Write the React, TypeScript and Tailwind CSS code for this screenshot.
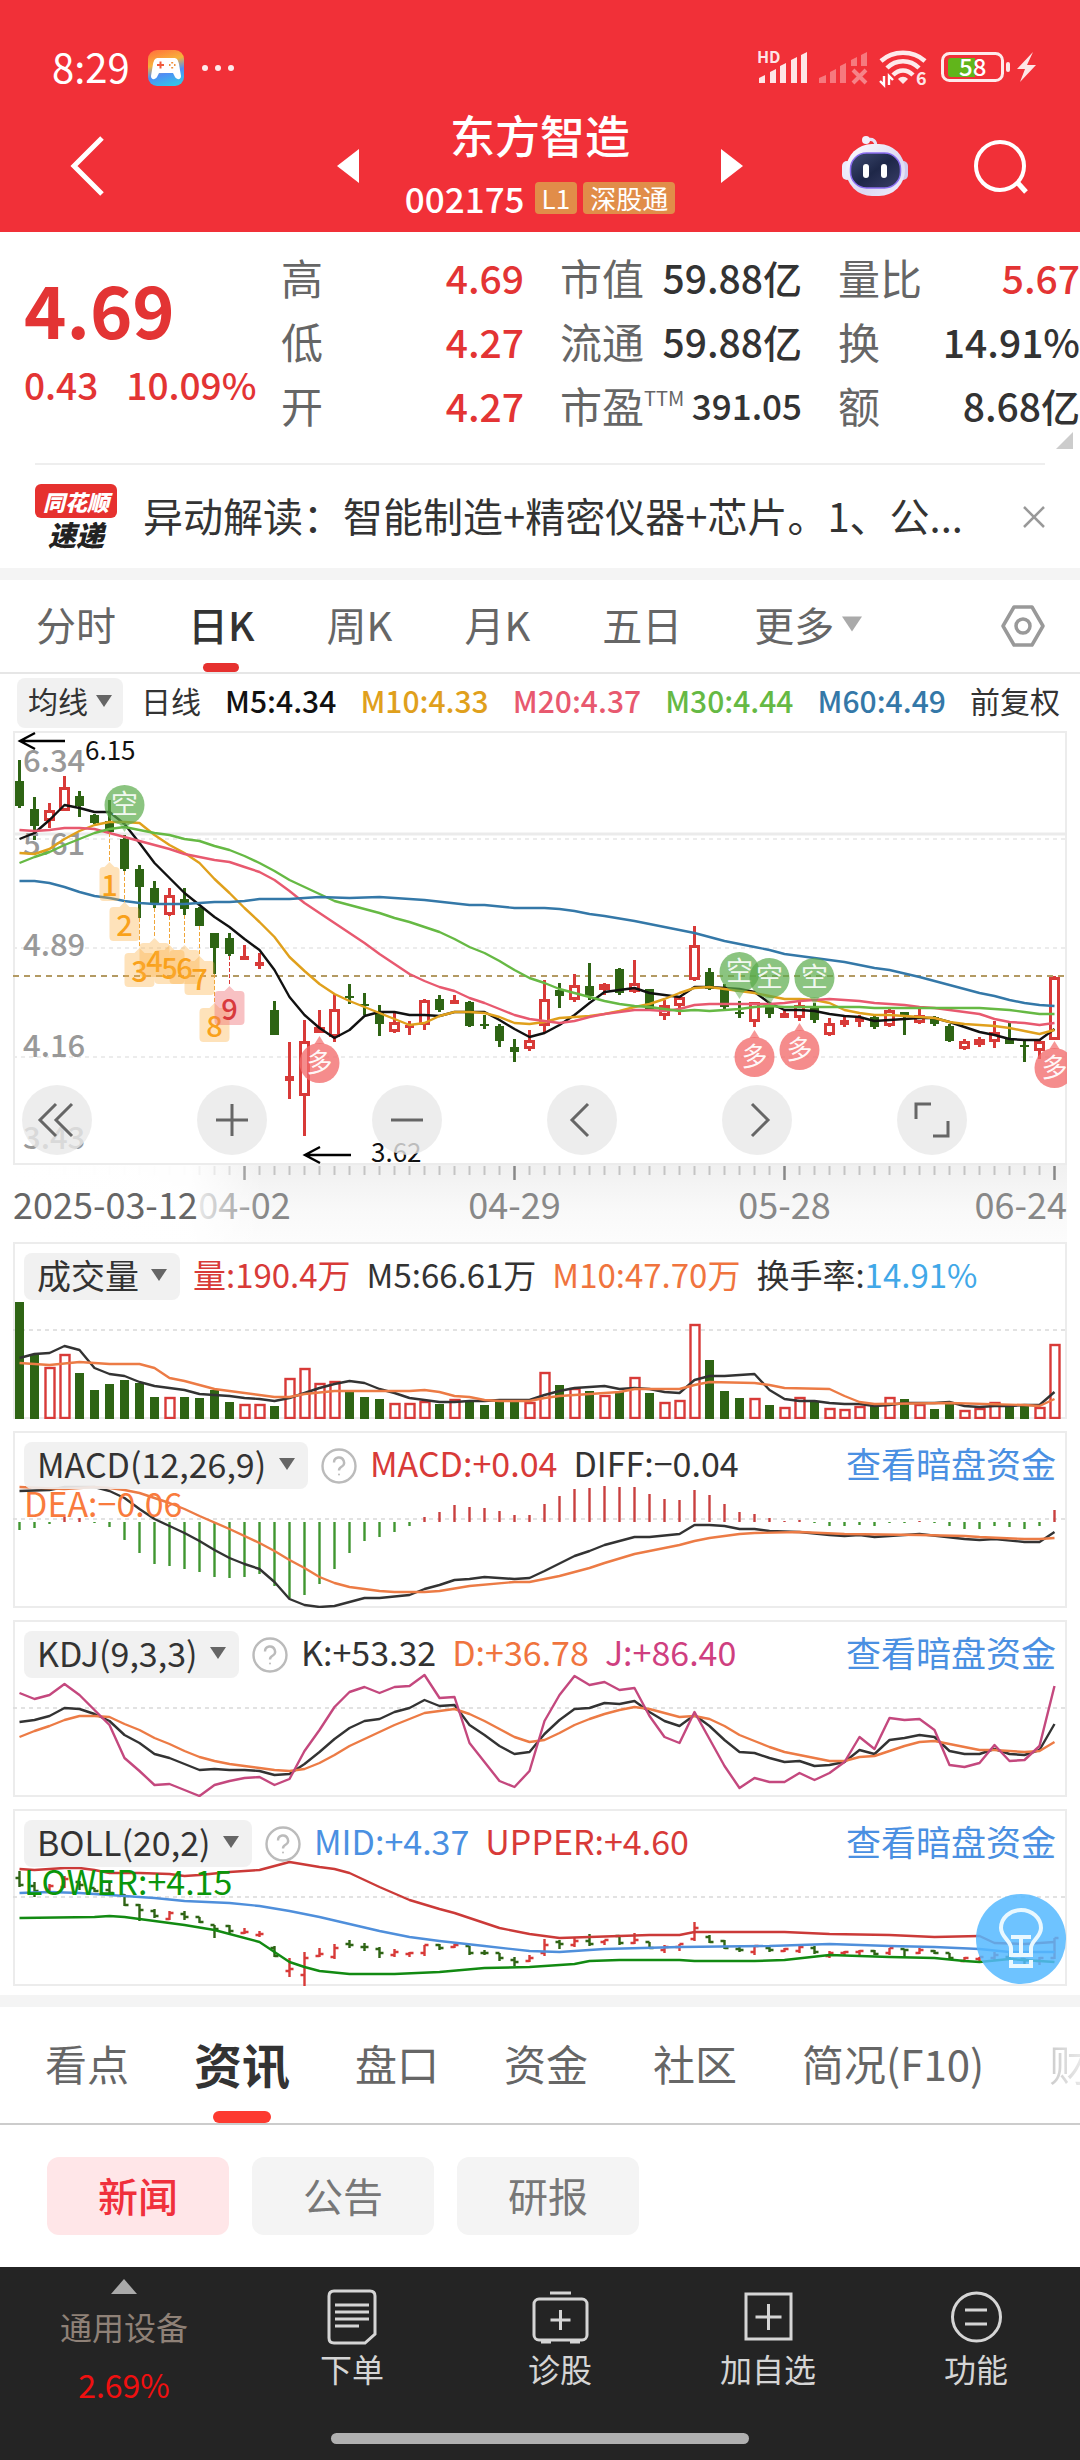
import { useState } from 'react'
import type { ReactNode } from 'react'
import clsx from 'clsx'

type Candle = [number, number, number, number, 0 | 1]
type Point = [number, number]

const STEP = 15
const px = (i: number) => 6.5 + i * STEP

// high, body top, body bottom, low, rising
const candles: Candle[] = [
  [29, 50, 75, 77, 0], [66, 78, 95, 109, 0], [72, 79, 90, 97, 1], [45, 56, 80, 80, 1], [60, 65, 75, 86, 0],
  [83, 84, 92, 93, 0], [69, 90, 101, 102, 0], [104, 108, 138, 140, 0], [134, 138, 156, 187, 0], [150, 157, 174, 177, 0],
  [157, 164, 184, 185, 1], [157, 168, 178, 184, 0], [176, 177, 195, 195, 0], [202, 202, 217, 243, 0], [202, 207, 223, 225, 0],
  [214, 225, 229, 229, 1], [222, 231, 235, 238, 1], [270, 279, 304, 304, 0], [311, 345, 350, 368, 1], [289, 310, 365, 405, 1],
  [279, 296, 302, 302, 1], [263, 278, 306, 311, 1], [253, 265, 267, 273, 0], [262, 273, 275, 284, 0], [274, 282, 293, 305, 0],
  [282, 291, 301, 302, 1], [290, 294, 297, 304, 1], [268, 269, 294, 299, 1], [264, 268, 279, 281, 0], [264, 269, 273, 273, 1],
  [270, 271, 295, 296, 0], [284, 293, 295, 298, 0], [293, 295, 310, 316, 0], [308, 316, 321, 331, 0], [299, 309, 318, 320, 1],
  [249, 268, 295, 301, 1], [252, 259, 265, 277, 0], [243, 254, 269, 271, 1], [232, 255, 265, 269, 0], [252, 253, 259, 264, 1],
  [237, 238, 262, 264, 0], [229, 252, 261, 262, 1], [258, 258, 278, 279, 0], [269, 274, 285, 289, 1], [265, 266, 275, 284, 1],
  [195, 214, 249, 250, 1], [237, 241, 258, 259, 0], [253, 256, 276, 278, 0], [270, 281, 283, 287, 0], [271, 271, 291, 296, 1],
  [272, 276, 283, 287, 0], [278, 282, 287, 287, 1], [271, 274, 287, 290, 1], [272, 276, 289, 292, 0], [287, 292, 304, 305, 1],
  [286, 289, 294, 296, 1], [284, 287, 291, 296, 1], [284, 286, 296, 298, 0], [278, 279, 295, 296, 1], [281, 281, 285, 304, 0],
  [278, 284, 292, 293, 1], [285, 286, 293, 295, 0], [293, 295, 310, 311, 0], [308, 310, 318, 319, 1], [306, 308, 314, 316, 1],
  [290, 301, 311, 317, 1], [291, 308, 313, 313, 0], [309, 314, 316, 331, 0], [308, 310, 320, 328, 1], [245, 246, 309, 309, 1],
]

const ma5 = [108, 102, 89, 74, 77, 81, 81, 93, 112, 132, 147, 162, 174, 186, 196, 208, 219, 239, 266, 284, 297, 307, 299, 285, 281, 281, 284, 284, 285, 281, 281, 281, 289, 298, 306, 302, 294, 284, 272, 261, 259, 257, 262, 264, 266, 256, 256, 257, 258, 261, 272, 279, 279, 280, 283, 285, 286, 290, 289, 288, 287, 287, 291, 296, 301, 304, 308, 309, 309, 298]
const ma10 = [122, 123, 118, 108, 100, 94, 91, 91, 92, 104, 114, 122, 132, 148, 162, 177, 191, 206, 226, 240, 253, 263, 270, 276, 282, 288, 294, 292, 285, 281, 281, 282, 286, 292, 293, 291, 287, 286, 285, 283, 280, 276, 273, 268, 262, 257, 256, 258, 260, 262, 265, 268, 268, 269, 272, 279, 282, 284, 284, 285, 286, 287, 291, 293, 294, 295, 297, 300, 303, 299]
const ma20 = [99, 100, 99, 97, 97, 98, 102, 106, 110, 114, 118, 123, 126, 129, 131, 136, 141, 149, 160, 172, 182, 192, 202, 212, 223, 233, 243, 250, 256, 260, 267, 272, 278, 284, 288, 290, 292, 290, 286, 283, 281, 279, 279, 280, 278, 274, 273, 273, 273, 273, 273, 272, 270, 269, 268, 269, 270, 272, 273, 274, 276, 277, 279, 281, 283, 288, 291, 292, 294, 292]
const ma30 = [132, 126, 121, 114, 108, 102, 98, 96, 99, 102, 104, 108, 110, 115, 119, 125, 132, 140, 149, 156, 163, 170, 174, 178, 182, 187, 191, 196, 201, 208, 216, 222, 230, 239, 247, 252, 258, 262, 266, 270, 273, 275, 276, 278, 280, 279, 280, 279, 278, 276, 275, 276, 276, 276, 276, 276, 276, 277, 277, 277, 277, 277, 277, 277, 277, 278, 279, 281, 283, 283]
const ma60: Point[] = [[0, 150], [1, 150], [2, 152], [3, 156], [4, 161], [5, 165], [6, 167], [7, 170], [8, 172], [9, 173], [11, 173], [13, 171], [14, 171], [15, 170], [16, 168], [18, 168], [20, 166], [22, 167], [24, 166], [26, 168], [27, 169], [30, 174], [31, 174], [33, 177], [35, 177], [36, 178], [37, 180], [38, 183], [39, 185], [41, 190], [42, 193], [43, 196], [45, 202], [47, 210], [49, 216], [50, 219], [51, 223], [53, 227], [55, 231], [57, 237], [58, 239], [60, 246], [62, 254], [64, 262], [65, 265], [66, 269], [67, 272], [68, 274], [69, 275]]

const volumes = [117, 65, 52, 65, 46, 29, 35, 39, 36, 22, 22, 22, 21, 29, 17, 15, 15, 13, 41, 51, 36, 38, 27, 22, 20, 16, 16, 18, 15, 20, 17, 14, 17, 19, 17, 47, 34, 31, 28, 24, 28, 42, 26, 17, 19, 95, 59, 28, 21, 21, 14, 12, 22, 18, 11, 10, 13, 14, 22, 20, 15, 10, 15, 9, 11, 17, 14, 14, 12, 75]
const vol5 = [61, 65, 66, 73, 69, 51, 45, 43, 37, 33, 31, 29, 25, 24, 23, 21, 20, 18, 21, 26, 31, 35, 38, 36, 30, 26, 21, 19, 17, 17, 18, 18, 19, 19, 19, 24, 28, 31, 32, 33, 30, 31, 30, 27, 26, 39, 43, 43, 44, 45, 29, 20, 18, 18, 16, 15, 15, 13, 14, 16, 16, 16, 17, 13, 12, 13, 13, 14, 14, 27]
const vol10: Point[] = [[0, 56], [2, 54], [4, 57], [6, 55], [8, 55], [9, 51], [10, 41], [11, 38], [12, 34], [13, 30], [14, 28], [16, 24], [17, 22], [18, 22], [19, 25], [21, 28], [26, 28], [27, 29], [28, 27], [29, 23], [30, 22], [31, 19], [32, 18], [34, 18], [35, 21], [36, 23], [39, 26], [40, 27], [41, 30], [44, 30], [45, 34], [46, 37], [49, 36], [50, 34], [51, 31], [54, 30], [55, 23], [56, 17], [57, 15], [62, 16], [67, 14], [68, 13], [69, 20]]

const macd = [-8, -6, -2, 5, 4, -1, -5, -18, -31, -42, -44, -47, -50, -55, -56, -55, -52, -64, -76, -73, -62, -47, -31, -19, -15, -10, -4, 5, 10, 17, 15, 14, 11, 7, 7, 18, 26, 33, 34, 36, 35, 35, 28, 23, 22, 32, 27, 18, 10, 8, 4, 1, 2, -1, -4, -4, -3, -4, -1, -1, 1, -1, -4, -7, -7, -4, -5, -7, -4, 12]
const diff: Point[] = [[0, 60], [2, 59], [3, 56], [5, 56], [6, 60], [7, 67], [8, 78], [9, 88], [10, 95], [11, 102], [12, 110], [13, 119], [14, 127], [15, 133], [16, 138], [17, 151], [18, 168], [19, 174], [20, 176], [21, 175], [23, 167], [24, 167], [26, 164], [27, 158], [28, 154], [29, 149], [30, 148], [31, 146], [33, 148], [34, 147], [35, 140], [37, 125], [38, 120], [39, 114], [40, 110], [41, 106], [42, 106], [44, 103], [45, 94], [46, 94], [47, 95], [48, 98], [49, 98], [50, 100], [52, 101], [54, 104], [55, 105], [56, 104], [57, 106], [60, 103], [63, 108], [64, 109], [65, 108], [67, 111], [68, 111], [69, 101]]
const dea: Point[] = [[0, 56], [3, 58], [5, 56], [6, 57], [7, 59], [8, 62], [9, 67], [10, 72], [11, 78], [12, 85], [14, 98], [16, 112], [17, 120], [18, 129], [19, 137], [20, 146], [21, 152], [22, 156], [24, 160], [25, 161], [27, 161], [28, 160], [30, 155], [33, 151], [34, 151], [36, 145], [38, 137], [39, 132], [41, 123], [44, 114], [45, 110], [46, 107], [48, 103], [49, 102], [52, 101], [55, 103], [60, 104], [63, 105], [64, 106], [67, 108], [68, 108], [69, 107]]

const kLine = [102, 100, 96, 88, 89, 94, 101, 115, 123, 134, 138, 144, 150, 149, 150, 150, 151, 155, 154, 144, 132, 119, 108, 101, 99, 92, 88, 80, 86, 85, 105, 115, 126, 134, 132, 114, 100, 89, 88, 83, 84, 81, 92, 101, 106, 95, 106, 120, 132, 133, 138, 142, 141, 146, 145, 142, 130, 134, 120, 118, 115, 117, 131, 134, 134, 129, 134, 135, 130, 104]
const dLine = [117, 111, 106, 100, 96, 96, 97, 104, 110, 118, 124, 131, 137, 141, 144, 146, 148, 150, 151, 149, 143, 135, 126, 119, 112, 105, 99, 93, 91, 89, 94, 101, 109, 117, 122, 120, 113, 105, 99, 94, 90, 87, 89, 93, 97, 96, 99, 106, 115, 121, 127, 132, 135, 138, 141, 141, 137, 136, 131, 126, 122, 121, 124, 127, 130, 130, 131, 132, 131, 122]
const jLine = [73, 79, 75, 64, 75, 90, 105, 138, 151, 165, 164, 170, 176, 165, 161, 158, 157, 165, 159, 131, 110, 87, 72, 67, 73, 67, 66, 55, 78, 77, 123, 142, 161, 167, 151, 101, 75, 56, 65, 62, 70, 68, 96, 117, 123, 92, 119, 146, 168, 158, 162, 162, 153, 160, 153, 142, 117, 129, 98, 100, 99, 110, 145, 147, 143, 125, 141, 140, 126, 66]

const upper: Point[] = [[0, 60], [1, 61], [3, 59], [4, 59], [5, 61], [6, 64], [8, 64], [10, 65], [11, 67], [12, 66], [14, 63], [16, 61], [18, 53], [20, 58], [21, 60], [22, 64], [24, 78], [26, 91], [28, 100], [29, 104], [32, 119], [34, 125], [36, 129], [38, 128], [42, 126], [44, 126], [45, 123], [51, 123], [54, 125], [58, 126], [61, 128], [64, 127], [65, 134], [67, 135], [69, 133]]
const mid: Point[] = [[0, 84], [2, 83], [4, 84], [6, 86], [9, 89], [11, 92], [14, 94], [16, 97], [18, 102], [20, 108], [22, 115], [24, 122], [26, 128], [28, 132], [31, 137], [34, 142], [36, 143], [39, 140], [44, 138], [50, 137], [54, 135], [58, 137], [61, 138], [64, 140], [66, 143], [69, 143]]
const lower: Point[] = [[0, 109], [5, 108], [6, 107], [7, 108], [8, 110], [11, 116], [13, 121], [16, 133], [18, 153], [19, 158], [20, 162], [22, 165], [25, 165], [28, 163], [31, 159], [34, 158], [36, 156], [37, 155], [38, 152], [40, 151], [44, 151], [45, 152], [49, 152], [51, 151], [54, 146], [58, 148], [61, 149], [63, 152], [64, 153], [66, 150], [69, 153]]

// candle index, tip y
const counts: Point[] = [[6, 131], [7, 171], [8, 217], [9, 207], [10, 214], [11, 214], [12, 225], [13, 272], [14, 255]]
const shorts: Point[] = [[7, 74], [48, 241], [50, 247], [53, 247]]
const longs: Point[] = [[20, 332], [49, 326], [52, 319], [69, 337]]

const RED = '#d83a38'
const GREEN = '#2e6414'

function Line({ data, color, width = 2.4 }: { data: number[] | Point[]; color: string; width?: number }) {
  const points = data
    .map((d, i) => (Array.isArray(d) ? `${px(d[0])},${d[1]}` : `${px(i)},${d}`))
    .join(' ')
  return <polyline points={points} fill="none" stroke={color} strokeWidth={width} strokeLinejoin="round" />
}

function Caret({ className }: { className?: string }) {
  return (
    <svg viewBox="0 0 16 12" className={className} aria-hidden="true">
      <path d="M0 0h16L8 12z" fill="currentColor" />
    </svg>
  )
}

function Picker({ label, name, small }: { label: string; name: string; small?: boolean }) {
  return (
    <label
      className={clsx(
        'flex shrink-0 items-center rounded-lg bg-[#f0f0f0]/90 pb-1 text-[#333]',
        small ? 'h-[50px] gap-2 px-[11px] text-[30px]' : 'h-[47px] gap-3 px-[13px] text-[34px]'
      )}
    >
      <select aria-label={name} className="shrink-0 appearance-none bg-transparent outline-none">
        <option>{label}</option>
      </select>
      <Caret className="h-3 w-4 text-[#666]" />
    </label>
  )
}

function Help() {
  return (
    <button aria-label="说明" className="size-9 shrink-0 text-[#bbb]">
      <svg viewBox="0 0 36 36" fill="none" stroke="currentColor" strokeWidth="2.4">
        <circle cx="18" cy="18" r="16.5" />
        <path d="M13 14.5a5 5 0 1 1 7.5 4.3c-1.8 1-2.5 1.8-2.5 3.7" />
        <circle cx="18" cy="26.5" r="1" fill="currentColor" stroke="none" />
      </svg>
    </button>
  )
}

function StatusIcons() {
  return (
    <svg viewBox="0 0 280 38" className="h-[38px] w-[280px] overflow-visible" fill="#fff" fillOpacity="0.88">
      <text x="0" y="14" fontSize="16" fontWeight="700">HD</text>
      <path d="M2 34v-5l6-3v8zM13 34V23l6-3v14zM23 34V17l6-3v20zM34 34V11l6-3v26zM44 34V6l6-3v31z" />
      <g opacity="0.4">
        <path d="M62 34v-5l7-3v8zM73 34V23l6-3v14zM83 34V17l6-3v20zM94 17v-6l6-3v9zM104 17V6l6-3v14z" />
        <path d="M96 21l13 13M109 21L96 34" stroke="#fff" strokeWidth="4" />
      </g>
      <g fill="none" stroke="#fff" strokeOpacity="0.9" strokeWidth="4.5">
        <path d="M124 12c12-11 32-11 44 0" />
        <path d="M130 19c9-9 23-9 32 0" />
        <path d="M136 26c6-6 14-6 20 0" />
      </g>
      <path d="M146 35l-5-5c3-3 7-3 10 0z" />
      <path d="M127 27v9l-4-4M132 36v-9l4 4" fill="none" stroke="#fff" strokeWidth="2.4" />
      <text x="159" y="36" fontSize="18" fontWeight="700">6</text>
      <rect x="185.500" y="4.500" width="60" height="27" rx="7" fill="none" stroke="#fff" strokeOpacity="0.9" strokeWidth="3" />
      <path d="M191 12q0-3 3-3h24v19h-24q-3 0-3-3z" fill="#61b51b" fillOpacity="1" />
      <text x="202" y="27" fontSize="24" fontWeight="500" fillOpacity="1">58</text>
      <rect x="249" y="13" width="4" height="10" rx="2" />
      <path d="M276 3l-16 17h8l-5 13 16-17h-9z" />
    </svg>
  )
}

function Robot() {
  return (
    <svg viewBox="0 0 66 62" className="h-[62px] w-[66px]">
      <defs>
        <linearGradient id="shell" x1="0" y1="0" x2="1" y2="1">
          <stop offset="0" stopColor="#fff" />
          <stop offset="0.6" stopColor="#dcd9f2" />
          <stop offset="1" stopColor="#f1effc" />
        </linearGradient>
        <linearGradient id="visor" x1="0" y1="0" x2="1" y2="1">
          <stop offset="0" stopColor="#3f4c72" />
          <stop offset="0.5" stopColor="#1e2748" />
          <stop offset="1" stopColor="#3a3f68" />
        </linearGradient>
      </defs>
      <path d="M25 5c6-2 9 1 9 7" fill="none" stroke="#e6e2f6" strokeWidth="3" />
      <circle cx="24" cy="5" r="4" fill="#f3f0fc" />
      <rect x="0" y="26" width="10" height="19" rx="5" fill="#eceafb" />
      <rect x="56" y="26" width="10" height="19" rx="5" fill="#cfcbee" />
      <rect x="4" y="9" width="59" height="52" rx="26" fill="url(#shell)" />
      <rect x="8.500" y="18" width="50" height="35" rx="16" fill="url(#visor)" stroke="#8a6df0" strokeWidth="1.500" />
      <rect x="21" y="29" width="6" height="14" rx="3" fill="#fff" />
      <rect x="39" y="29" width="6" height="14" rx="3" fill="#fff" />
    </svg>
  )
}

function Header() {
  return (
    <header className="bg-[#f13038] text-white">
      <div className="flex items-center justify-between pt-[34px] pr-[43px] pl-[52px]">
        <div className="flex h-[68px] items-center gap-[18px]">
          <span className="pb-1 text-[40px] leading-none">8:29</span>
          <svg viewBox="0 0 36 36" className="size-9">
            <defs>
              <linearGradient id="pad" x1="0.300" y1="0" x2="0.600" y2="1">
                <stop offset="0" stopColor="#ff7a3c" />
                <stop offset="0.350" stopColor="#f7b23b" />
                <stop offset="0.650" stopColor="#4f8df5" />
                <stop offset="1" stopColor="#35c2e8" />
              </linearGradient>
            </defs>
            <rect width="36" height="36" rx="9" fill="url(#pad)" />
            <path d="M10 8h16c3 0 4 2 5 6l2 12c0 4-4 4-6 1l-2-4H11l-2 4c-2 3-6 3-6-1l2-12c1-4 2-6 5-6z" fill="#fff" />
            <path d="M9 15h7M12.500 11.500v7" stroke="#f05a3c" strokeWidth="2" />
            <path d="M21 15h1.500M26 15h1.500M24.200 12v1.500M24.200 17v1.500" stroke="#f0903c" strokeWidth="2" />
          </svg>
          <svg viewBox="0 0 32 6" className="h-1.5 w-8" fill="#fff" fillOpacity="0.9">
            <circle cx="3" cy="3" r="3" />
            <circle cx="16" cy="3" r="3" />
            <circle cx="29" cy="3" r="3" />
          </svg>
        </div>
        <StatusIcons />
      </div>
      <div className="grid h-[130px] grid-cols-[1fr_406px_1fr] items-center pb-[3px]">
        <button aria-label="返回" className="ml-[70px] w-9 justify-self-start">
          <svg viewBox="0 0 36 60" className="h-[60px] w-9" fill="none" stroke="#fff" strokeWidth="5">
            <path d="M32 2L4 30l28 28" />
          </svg>
        </button>
        <div className="flex items-center justify-between">
          <button aria-label="上一只">
            <svg viewBox="0 0 22 34" className="h-[34px] w-[22px]"><path d="M22 0v34L0 17z" fill="#fff" /></svg>
          </button>
          <div className="flex flex-col items-center gap-2 pb-1">
            <h1 className="text-[45px] leading-[60px] font-medium">东方智造</h1>
            <div className="flex items-center gap-[6px]">
              <span className="mr-1 text-[35px] leading-[50px] font-medium">002175</span>
              <span className="rounded-sm bg-[#e18d49] px-[7px] text-[26px] leading-8">L1</span>
              <span className="rounded-sm bg-[#e18d49] px-[7px] text-[26px] leading-8">深股通</span>
            </div>
          </div>
          <button aria-label="下一只">
            <svg viewBox="0 0 22 34" className="h-[34px] w-[22px]"><path d="M0 0v34l22-17z" fill="#fff" /></svg>
          </button>
        </div>
        <div className="flex items-center justify-end gap-[66px] pr-[52px]">
          <button aria-label="智能助手"><Robot /></button>
          <button aria-label="搜索">
            <svg viewBox="0 0 54 56" className="h-14 w-[54px]" fill="none" stroke="#fff" strokeWidth="4">
              <circle cx="26" cy="28" r="24" />
              <path d="M43 44l9 10" strokeWidth="5" />
            </svg>
          </button>
        </div>
      </div>
    </header>
  )
}

function Stats({ rows, className }: { rows: { name: ReactNode; value: string; up?: boolean; small?: boolean }[]; className: string }) {
  return (
    <dl className={clsx('h-[192px] whitespace-nowrap', className)}>
      {rows.map((row, i) => (
        <div key={i} className="flex justify-between">
          <dt className="flex text-[42px] font-normal text-[#666]">{row.name}</dt>
          <dd className={clsx(row.up && 'text-[#e33434]', row.small && 'text-[35px]')}>{row.value}</dd>
        </div>
      ))}
    </dl>
  )
}

function Quote() {
  return (
    <section className="relative flex h-[231px] pt-[13px] text-[39px] leading-[64px] font-medium text-[#333]">
      <div className="w-[281px] shrink-0 pl-6 text-[#e33434]">
        <div className="mt-[19px] text-[72px] leading-[88px] font-bold">4.69</div>
        <div className="mt-1 flex gap-7 text-[37px] leading-[56px]">
          <span>0.43</span>
          <span>10.09%</span>
        </div>
      </div>
      <Stats
        className="w-[243px] shrink-0"
        rows={[
          { name: '高', value: '4.69', up: true },
          { name: '低', value: '4.27', up: true },
          { name: '开', value: '4.27', up: true },
        ]}
      />
      <Stats
        className="ml-9 w-[242px] shrink-0"
        rows={[
          { name: '市值', value: '59.88亿' },
          { name: '流通', value: '59.88亿' },
          { name: <>市盈<span className="text-[20px] leading-[50px]">TTM</span></>, value: '391.05', small: true },
        ]}
      />
      <Stats
        className="ml-9 flex-1"
        rows={[
          { name: '量比', value: '5.67', up: true },
          { name: '换', value: '14.91%' },
          { name: '额', value: '8.68亿' },
        ]}
      />
      <svg viewBox="0 0 17 17" className="absolute right-[7px] bottom-[14px] size-[17px]">
        <path d="M17 0v17H0z" fill="#ccc" />
      </svg>
    </section>
  )
}

function News() {
  return (
    <section className="mx-[35px] flex h-[105px] items-center border-t-2 border-[#eee]">
      <div className="flex w-[82px] shrink-0 flex-col items-center font-black italic">
        <span className="w-full rounded-md bg-[#e6312f] text-center text-[22px] leading-[34px] text-white">同花顺</span>
        <span className="text-[28px] leading-8 text-[#222]">速递</span>
      </div>
      <p className="ml-[26px] flex-1 truncate pb-1 text-[40px] text-[#333]">异动解读：智能制造+精密仪器+芯片。1、公...</p>
      <button aria-label="关闭" className="text-[#999]">
        <svg viewBox="0 0 22 22" className="size-[22px]" stroke="currentColor" strokeWidth="2.500"><path d="M1 1l20 20M21 1L1 21" /></svg>
      </button>
    </section>
  )
}

const periods = ['分时', '日K', '周K', '月K', '五日']

function PeriodTabs() {
  const [active, setActive] = useState('日K')
  return (
    <nav className="flex h-[94px] items-stretch gap-[72px] border-b-2 border-[#e6e6e6] pr-[35px] pl-9 text-[40px] text-[#666]">
      {periods.map((p) => (
        <button
          key={p}
          onClick={() => setActive(p)}
          className={clsx('relative pb-1', p === active && 'font-medium text-[#333]')}
        >
          {p}
          {p === active && <span className="absolute bottom-0 left-1/2 h-[9px] w-9 -translate-x-1/2 rounded-full bg-[#e6312f]" />}
        </button>
      ))}
      <button className="flex items-center gap-2 pb-1">
        更多
        <Caret className="h-4 w-5 text-[#aaa]" />
      </button>
      <button aria-label="设置" className="ml-auto">
        <svg viewBox="0 0 44 42" className="h-[42px] w-11" fill="none" stroke="#999" strokeWidth="3.500" strokeLinejoin="round">
          <path d="M13 2h18l11 19-11 19H13L2 21z" />
          <circle cx="22" cy="21" r="7" />
        </svg>
      </button>
    </nav>
  )
}

function PriceMarks() {
  return (
    <>
      {counts.map(([i, y], n) => {
        const last = n === 8
        const x = px(i)
        const half = n === 0 ? 10 : 15
        return (
          <g key={i}>
            <path d={`M${x} ${candles[i][3]}V${y}`} stroke={last ? '#d83a38' : '#f0a63a'} strokeDasharray="4 2" />
            <path
              d={`M${x} ${y}l5 5h${half - 9}q4 0 4 4v26q0 4-4 4h-${half * 2 - 8}q-4 0-4-4v-26q0-4 4-4h${half - 9}z`}
              fill={last ? '#ef6b6f' : '#fbb040'}
              fillOpacity={last ? 0.42 : 0.36}
            />
            <text x={x} y={y + 34} textAnchor="middle" fontSize="29" fontWeight="500" fill={last ? '#d8393c' : '#f9a11b'}>
              {n + 1}
            </text>
          </g>
        )
      })}
      {shorts.map(([i, y]) => (
        <g key={i} transform={`translate(${px(i)} ${y})`}>
          <circle r="20" fill="#5aab4a" fillOpacity="0.7" />
          <path d="M-5 19h10l-5 8z" fill="#5aab4a" fillOpacity="0.5" />
          <text y="9" textAnchor="middle" fontSize="27" fill="#fff" fillOpacity="0.9">空</text>
        </g>
      ))}
      {longs.map(([i, y]) => (
        <g key={i} transform={`translate(${px(i)} ${y})`}>
          <path d="M-5-19h10l-5-8z" fill="#f26b6b" fillOpacity="0.7" />
          <circle r="20" fill="#f26b6b" fillOpacity="0.78" />
          <text y="9" textAnchor="middle" fontSize="26" fill="#fff" fillOpacity="0.95">多</text>
        </g>
      ))}
    </>
  )
}

function Axis() {
  const majors = [15, 33, 51, 69]
  return (
    <svg viewBox="0 0 1054 77" className="block w-full" fontSize="36" fill="#888">
      <defs>
        <linearGradient id="shade" x1="0" y1="0" x2="0" y2="1">
          <stop offset="0" stopColor="#f0f0f0" />
          <stop offset="0.6" stopColor="#f9f9f9" />
          <stop offset="1" stopColor="#fcfcfc" />
        </linearGradient>
        <linearGradient id="cover" x1="0" y1="0" x2="1" y2="0">
          <stop offset="0" stopColor="#fff" />
          <stop offset="0.700" stopColor="#fff" stopOpacity="0.95" />
          <stop offset="1" stopColor="#fff" stopOpacity="0" />
        </linearGradient>
      </defs>
      <rect width="1054" height="77" fill="url(#shade)" />
      {candles.map((_, i) => {
        const major = majors.includes(i)
        return (
          <path key={i} d={`M${px(i)} 1v${major ? 14 : 9}`} stroke={major ? '#888' : '#c4c4c4'} strokeWidth={major ? 2.5 : 2} />
        )
      })}
      <text x={px(15)} y="54" textAnchor="middle">04-02</text>
      <text x={px(33)} y="54" textAnchor="middle">04-29</text>
      <text x={px(51)} y="54" textAnchor="middle">05-28</text>
      <text x="1054" y="54" textAnchor="end">06-24</text>
      <rect width="250" height="77" fill="url(#cover)" />
      <text x="0" y="54" fill="#666">2025-03-12</text>
    </svg>
  )
}

const tools: { name: string; d: string }[] = [
  { name: '收起', d: 'M34 19L18 35l16 16M50 19L34 35l16 16' },
  { name: '放大', d: 'M35 19v32M19 35h32' },
  { name: '缩小', d: 'M19 35h32' },
  { name: '左移', d: 'M41 19L25 35l16 16' },
  { name: '右移', d: 'M30 19l16 16-16 16' },
  { name: '全屏', d: 'M19 34V19h15M36 51h15V36' },
]

function PriceChart() {
  return (
    <div className="relative">
      <svg viewBox="0 0 1054 434" className="block w-full overflow-visible">
        <rect x="1" y="1" width="1052" height="432" fill="#fff" stroke="#ececec" strokeWidth="2" />
        <path d="M0 103h1054" stroke="#ebebeb" strokeWidth="3" />
        <path d="M0 108h1054M0 217h1054M0 326h1054" stroke="#ececec" strokeWidth="2" strokeDasharray="4 4" />
        <path d="M0 245h1054" stroke="#b39a63" strokeWidth="2" strokeDasharray="6 5" />
        {candles.map(([high, top, bottom, low, up], i) => {
          const solid = !up || bottom - top <= 5
          return (
            <g key={i} stroke={up ? RED : GREEN} strokeWidth="3">
              <path d={`M${px(i)} ${high}V${low}`} />
              {solid ? (
                <rect x={px(i) - 4.5} y={top} width="9" height={Math.max(bottom - top, 2)} fill={up ? RED : GREEN} stroke="none" />
              ) : (
                <rect x={px(i) - 4} y={top + 1.5} width="8" height={bottom - top - 3} fill="#fff" />
              )}
            </g>
          )
        })}
        <g fontSize="31" fontWeight="500" fill="#999">
          <text x="10" y="41">6.34</text>
          <text x="10" y="124">5.61</text>
          <text x="10" y="225">4.89</text>
          <text x="10" y="326">4.16</text>
          <text x="10" y="418">3.43</text>
        </g>
        <Line data={ma5} color="#111" />
        <Line data={ma10} color="#e0a01c" />
        <Line data={ma20} color="#e8596f" />
        <Line data={ma30} color="#66b944" />
        <Line data={ma60} color="#3478a8" />
        <clipPath id="frame">
          <rect width="1054" height="434" />
        </clipPath>
        <g clipPath="url(#frame)">
          <PriceMarks />
        </g>
        <g fill="none" stroke="#000" strokeWidth="2.4">
          <path d="M52 10H7M22 2L7 10l15 8" />
          <path d="M338 424h-46M307 416l-15 8 15 8" />
        </g>
        <text x="72" y="29" fontSize="26" fill="#111">6.15</text>
        <text x="358" y="431" fontSize="26" fill="#111">3.62</text>
      </svg>
      <div className="absolute bottom-[10px] left-[9px] flex w-[945px] justify-between">
        {tools.map((t) => (
          <button key={t.name} aria-label={t.name} className="size-[70px] rounded-full bg-[#e9e9e9]/80">
            <svg viewBox="0 0 70 70" fill="none" stroke="#666" strokeWidth="3">
              <path d={t.d} />
            </svg>
          </button>
        ))}
      </div>
    </div>
  )
}

function Panel({ chart, children, tail }: { chart: ReactNode; children: ReactNode; tail?: ReactNode }) {
  return (
    <section className="grid ring-2 ring-[#ececec] ring-inset">
      <svg viewBox="0 0 1054 177" className="block w-full [grid-area:1/1]">
        <path d="M0 88h1054" stroke="#d9d9d9" strokeWidth="1.500" strokeDasharray="4 4" />
        {chart}
      </svg>
      <div className="px-[11px] pt-[11px] text-[34px] [grid-area:1/1]">
        <div className="flex h-[47px] items-center gap-[13px] whitespace-nowrap">{children}</div>
        {tail}
      </div>
    </section>
  )
}

function Values({ children }: { children: ReactNode }) {
  return <div className="flex flex-1 gap-4 pb-1">{children}</div>
}

function HiddenFunds() {
  return <a href="#funds" className="ml-auto text-[35px] text-[#4a90e2]">查看暗盘资金</a>
}

function Indicators() {
  return (
    <div className="flex flex-col gap-3">
      <Panel
        chart={
          <>
            {volumes.map((v, i) =>
              candles[i][4] ? (
                <rect key={i} x={px(i) - 4} y={178 - v} width="9" height={v - 2} fill="#fff" stroke={RED} strokeWidth="2.4" />
              ) : (
                <rect key={i} x={px(i) - 4.5} y={177 - v} width="9" height={v} fill={GREEN} />
              )
            )}
            <Line data={vol5.map((v) => 177 - v)} color="#333" />
            <Line data={vol10.map(([i, v]): Point => [i, 177 - v])} color="#ec7b45" />
          </>
        }
      >
        <Picker label="成交量" name="成交量指标" />
        <div className="flex gap-4 pb-1 text-[33px] text-[#333]">
          <span className="text-[#d83a38]">量:190.4万</span>
          <span>M5:66.61万</span>
          <span className="text-[#f0743e]">M10:47.70万</span>
          <span>换手率:<span className="text-[#41a8e8]">14.91%</span></span>
        </div>
      </Panel>

      <Panel
        chart={
          <>
            {macd.map((v, i) => (
              <path key={i} d={`M${px(i)} 91v${-v}`} stroke={v > 0 ? '#c9403f' : '#3f9630'} strokeWidth="2.4" />
            ))}
            <Line data={diff} color="#333" />
            <Line data={dea} color="#ec7b45" />
          </>
        }
        tail={<div className="leading-[28px] text-[#f97b3d]">DEA:−0.06</div>}
      >
        <Picker label="MACD(12,26,9)" name="MACD指标" />
        <Help />
        <Values>
          <span className="text-[#d83a38]">MACD:+0.04</span>
          <span className="text-[#333]">DIFF:−0.04</span>
          <HiddenFunds />
        </Values>
      </Panel>

      <Panel
        chart={
          <>
            <Line data={kLine} color="#333" />
            <Line data={dLine} color="#ec7b45" />
            <Line data={jLine} color="#c4487e" />
          </>
        }
      >
        <Picker label="KDJ(9,3,3)" name="KDJ指标" />
        <Help />
        <Values>
          <span className="text-[#333]">K:+53.32</span>
          <span className="text-[#f0743e]">D:+36.78</span>
          <span className="text-[#cf3f80]">J:+86.40</span>
          <HiddenFunds />
        </Values>
      </Panel>

      <div className="relative">
        <Panel
          chart={
            <>
              {candles.map(([high, top, bottom, low, up], i) => {
                const y = (v: number) => Math.round(53 + v * 0.31)
                const [open, close] = up ? [bottom, top] : [top, bottom]
                return (
                  <path
                    key={i}
                    d={`M${px(i)} ${y(high)}V${Math.min(y(low) + 1, 177)}M${px(i) - 4} ${y(open)}h4M${px(i)} ${y(close)}h4`}
                    stroke={up ? RED : GREEN}
                    strokeWidth="2.4"
                  />
                )
              })}
              <Line data={upper} color="#cb3a38" />
              <Line data={mid} color="#4f8fdb" />
              <Line data={lower} color="#128a12" />
            </>
          }
          tail={<div className="leading-[28px] text-[#0a960a]">LOWER:+4.15</div>}
        >
          <Picker label="BOLL(20,2)" name="BOLL指标" />
          <Help />
          <Values>
            <span className="text-[#4a90e2]">MID:+4.37</span>
            <span className="text-[#d83a38]">UPPER:+4.60</span>
            <HiddenFunds />
          </Values>
        </Panel>
        <button aria-label="诊断提示" className="absolute right-[1px] bottom-[2px] size-[90px] rounded-full bg-[#55b8ff]/85">
          <svg viewBox="0 0 90 90" fill="none" stroke="#e9f8ff" strokeWidth="4">
            <path d="M35 61v-7c0-7-10-11-10-20a20 18 0 0 1 40 0c0 9-10 13-10 20v7z" />
            <path d="M35 66v6h20v-6M45 60V43M35 43h20" />
          </svg>
        </button>
      </div>
    </div>
  )
}

const sections = ['看点', '资讯', '盘口', '资金', '社区', '简况(F10)']
const feeds = ['新闻', '公告', '研报']

function InfoTabs() {
  const [section, setSection] = useState('资讯')
  const [feed, setFeed] = useState('新闻')
  return (
    <section>
      <nav className="flex h-[118px] gap-[65px] overflow-hidden border-b-2 border-[#ccc] pl-[45px] text-[42px] whitespace-nowrap text-[#666]">
        {sections.map((s) => (
          <button
            key={s}
            onClick={() => setSection(s)}
            className={clsx('relative shrink-0 pb-[5px]', s === section && 'text-[48px] font-bold text-[#333]')}
          >
            {s}
            {s === section && <span className="absolute bottom-0 left-1/2 h-3 w-[58px] -translate-x-1/2 rounded-full bg-[#fd3a30]" />}
          </button>
        ))}
        <button className="shrink-0 bg-gradient-to-r from-[#ccc] to-white to-70% bg-clip-text pb-[5px] text-transparent">财务</button>
      </nav>
      <div className="flex gap-[23px] px-[47px] py-8">
        {feeds.map((f) => (
          <button
            key={f}
            onClick={() => setFeed(f)}
            className={clsx(
              'h-[78px] w-[182px] rounded-xl pb-[3px] text-[40px]',
              f === feed ? 'bg-[#ffe6e8] font-medium text-[#f0303c]' : 'bg-[#f4f4f4] text-[#777]'
            )}
          >
            {f}
          </button>
        ))}
      </div>
    </section>
  )
}

const actions: { name: string; icon: ReactNode }[] = [
  {
    name: '下单',
    icon: (
      <>
        <path d="M10 3h36q5 0 5 5v38l-10 9H10q-5 0-5-5V8q0-5 5-5z" />
        <path d="M11 17h34M11 24h34M11 31h34M11 38h24" />
      </>
    ),
  },
  {
    name: '诊股',
    icon: (
      <>
        <path d="M18 5h21" />
        <rect x="2" y="11" width="53" height="41" rx="5" />
        <path d="M28.500 22v20M18.500 32h20M9 54h10M38 54h10" />
      </>
    ),
  },
  {
    name: '加自选',
    icon: (
      <>
        <rect x="6" y="6" width="45" height="45" />
        <path d="M28.500 16v26M15.500 29h26" />
      </>
    ),
  },
  {
    name: '功能',
    icon: (
      <>
        <circle cx="28.500" cy="29" r="24" />
        <path d="M17 22h22M17 36h22" />
      </>
    ),
  },
]

function BottomBar() {
  return (
    <footer className="flex-1 bg-[#242424] text-[32px]">
      <div className="grid h-[166px] grid-cols-[248px_repeat(4,1fr)]">
        <a href="#sector" className="flex flex-col items-center pt-3">
          <svg viewBox="0 0 26 15" className="h-[15px] w-[26px]"><path d="M13 0l13 15H0z" fill="#aaa" /></svg>
          <span className="mt-3 leading-10 text-[#8f8177]">通用设备</span>
          <span className="mt-[18px] leading-10 text-[#f01010]">2.69%</span>
        </a>
        {actions.map((a) => (
          <button key={a.name} className="flex flex-col items-center pt-[21px] text-[#d5d5d5]">
            <svg viewBox="0 0 57 57" className="size-[57px]" fill="none" stroke="currentColor" strokeWidth="3">
              {a.icon}
            </svg>
            <span className="mt-[3px] leading-10">{a.name}</span>
          </button>
        ))}
      </div>
      <div className="mx-auto mb-4 h-[11px] w-[418px] rounded-full bg-[#b0b0b0]" />
    </footer>
  )
}

export default function App() {
  return (
    <main className="flex min-h-screen flex-col overflow-x-hidden bg-white font-['Noto_Sans_CJK_SC',sans-serif]">
      <Header />
      <Quote />
      <News />
      <div className="h-3 bg-[#f4f4f4]" />
      <PeriodTabs />
      <div className="flex h-[57px] items-center gap-[18px] pr-5 pl-[17px] text-[30px] text-[#333]">
        <Picker label="均线" name="主图指标" small />
        <div className="flex flex-1 justify-between pb-1 whitespace-nowrap">
          <span>日线</span>
          <span className="font-medium text-[#111]">M5:4.34</span>
          <span className="font-medium text-[#e0a01c]">M10:4.33</span>
          <span className="font-medium text-[#e8596f]">M20:4.37</span>
          <span className="font-medium text-[#66b944]">M30:4.44</span>
          <span className="font-medium text-[#3478a8]">M60:4.49</span>
          <span>前复权</span>
        </div>
      </div>
      <div className="px-[13px] pb-[9px]">
        <PriceChart />
        <Axis />
        <Indicators />
      </div>
      <div className="h-3 bg-[#f4f4f4]" />
      <InfoTabs />
      <BottomBar />
    </main>
  )
}
